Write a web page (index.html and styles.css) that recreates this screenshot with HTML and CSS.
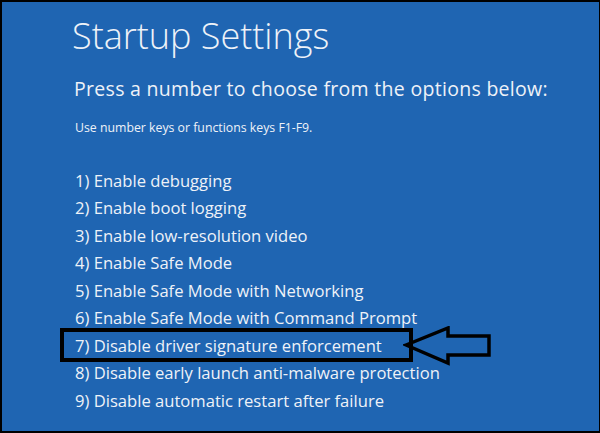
FILE: index.html
```html
<!DOCTYPE html>
<html>
<head>
<meta charset="utf-8">
<link rel="stylesheet" href="styles.css">
</head>
<body>
<div class="screen">
  <h1 class="title">Startup Settings</h1>
  <p class="prompt">Press a number to choose from the options below:</p>
  <p class="hint">Use number keys or functions keys F1-F9.</p>
  <ol class="options">
    <li class="option">1) Enable debugging</li>
    <li class="option">2) Enable boot logging</li>
    <li class="option">3) Enable low-resolution video</li>
    <li class="option">4) Enable Safe Mode</li>
    <li class="option">5) Enable Safe Mode with Networking</li>
    <li class="option">6) Enable Safe Mode with Command Prompt</li>
    <li class="option option-marked">7) Disable driver signature enforcement
      <svg class="arrow" width="92" height="40" viewBox="0 0 92 40">
        <polygon points="3,19 45,2 45,10 86,10 86,29 45,29 45,37" fill="none" stroke="#000" stroke-width="3.5" stroke-linejoin="miter"/>
      </svg>
    </li>
    <li class="option">8) Disable early launch anti-malware protection</li>
    <li class="option">9) Disable automatic restart after failure</li>
  </ol>
</div>
</body>
</html>
```
FILE: styles.css
```css
html, body {
  margin: 0;
  padding: 0;
  background: #000;
}
.screen {
  box-sizing: border-box;
  width: 600px;
  height: 433px;
  background: #1f65b2;
  border-style: solid;
  border-color: #000;
  border-width: 2px 1px 2px 2px;
  padding: 14px 0 0 70px;
  color: #eef2f8;
  font-family: "Open Sans", "DejaVu Sans", sans-serif;
  overflow: hidden;
  white-space: nowrap;
}
.title {
  margin: 0;
  font-size: 36px;
  line-height: 40px;
  font-weight: 300;
}
.prompt {
  margin: 22.4px 0 0 2px;
  font-size: 19.5px;
  line-height: 22px;
  font-weight: 400;
  letter-spacing: 0.3px;
}
.hint {
  margin: 19.8px 0 0 3px;
  font-size: 12.3px;
  line-height: 15px;
}
.options {
  list-style: none;
  margin: 31.6px 0 0 3px;
  padding: 0;
}
.option {
  font-size: 16.6px;
  line-height: 27.5px;
  position: relative;
  width: 321px;
}
.option-marked::after {
  content: "";
  position: absolute;
  left: -15px;
  right: -17px;
  top: -4px;
  bottom: -3px;
  border: 4px solid #000;
}
.arrow {
  position: absolute;
  left: 328px;
  top: -6px;
}
```
